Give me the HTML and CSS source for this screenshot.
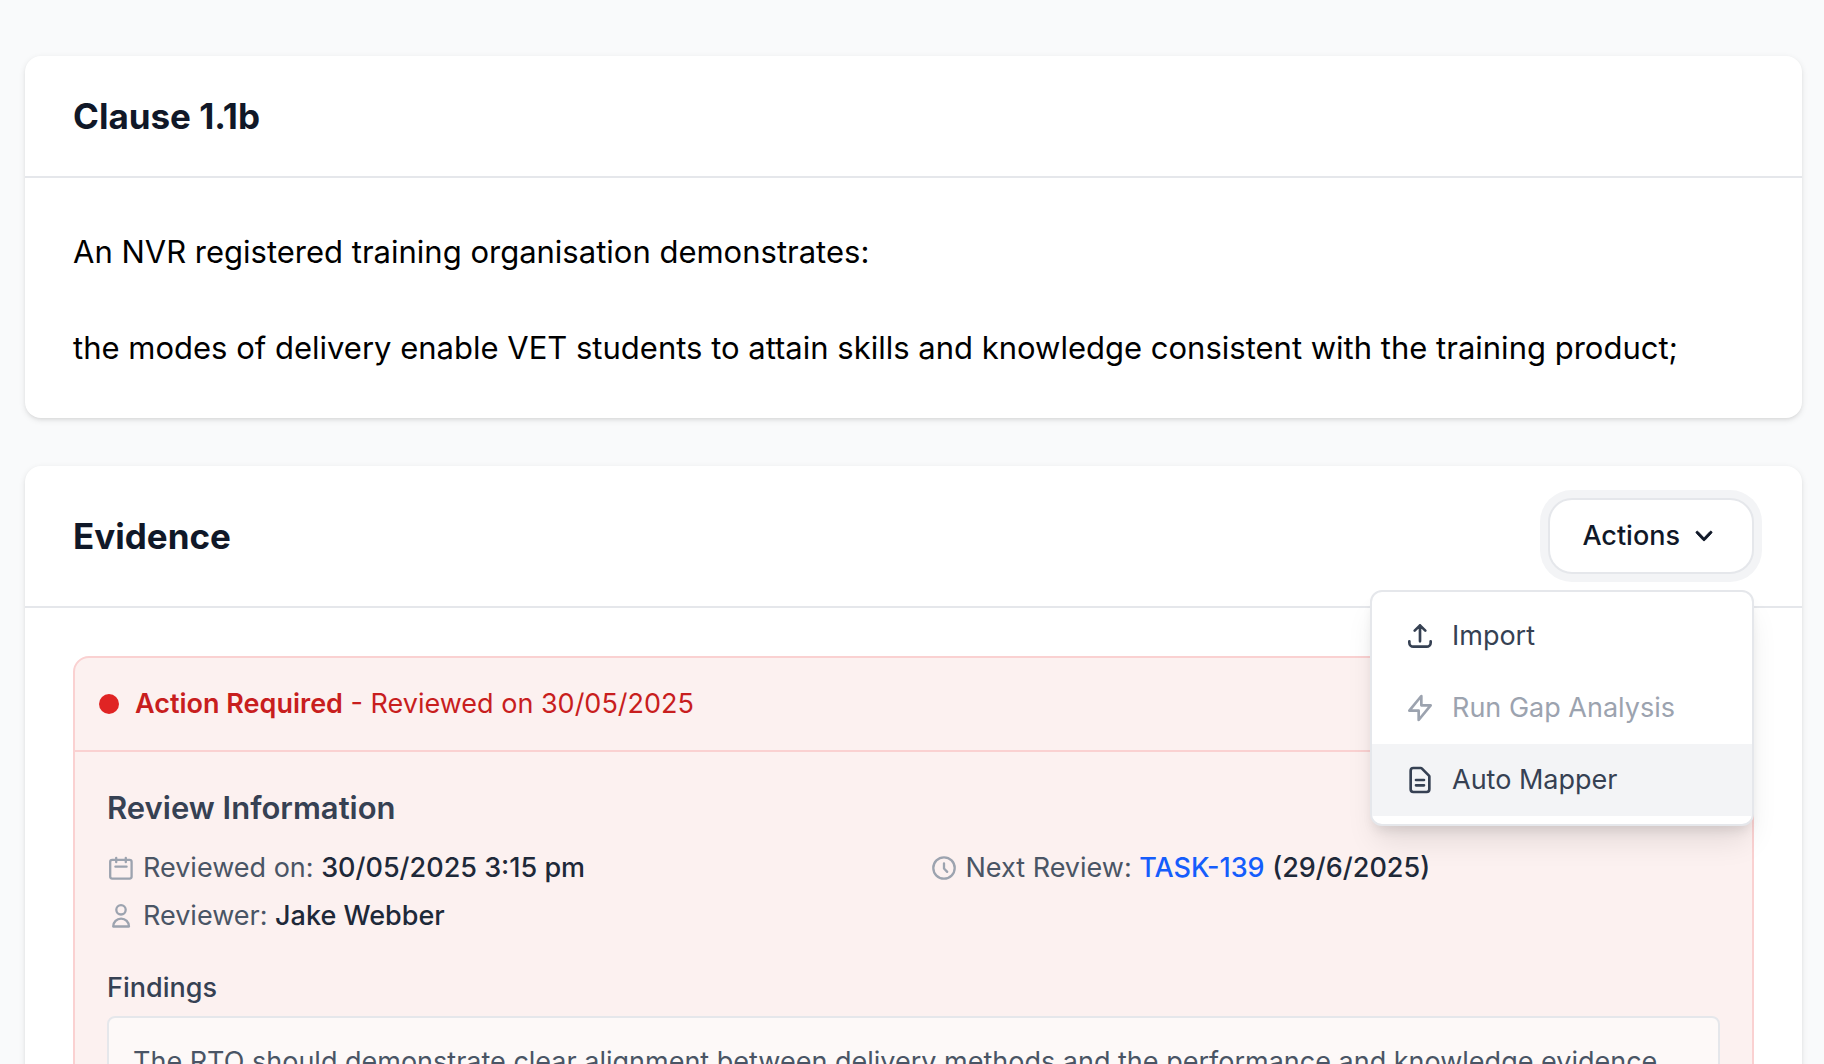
FILE: index.html
```html
<!DOCTYPE html>
<html lang="en">
<head>
<meta charset="UTF-8">
<meta name="viewport" content="width=device-width, initial-scale=1">
<title>Clause 1.1b</title>
<link rel="stylesheet" href="styles.css">
</head>
<body>

<main class="page">
    <!-- clause text -->
    <section class="card">
        <header class="card-header">
            <h2>Clause 1.1b</h2>
        </header>
        <div class="card-body clause">
            <p>An NVR registered training organisation demonstrates:</p>
            <p>the modes of delivery enable VET students to attain skills and knowledge consistent with the training product;</p>
        </div>
    </section>

    <!-- evidence -->
    <section class="card">
        <header class="card-header">
            <h2>Evidence</h2>
            <div class="dropdown">
                <button type="button" class="actions-btn" aria-haspopup="true" aria-expanded="true">
                    Actions
                    <svg class="icon chevron" viewBox="0 0 20 20"><path d="M5.23 7.21a.75.75 0 011.06.02L10 11.168l3.71-3.938a.75.75 0 111.08 1.04l-4.25 4.5a.75.75 0 01-1.08 0l-4.25-4.5a.75.75 0 01.02-1.06z"/></svg>
                </button>
                <div class="menu">
                    <button type="button" class="menu-item">
                        <svg class="icon line" viewBox="0 0 24 24"><path d="M4 16v1a3 3 0 003 3h10a3 3 0 003-3v-1m-4-8l-4-4m0 0L8 8m4-4v12"/></svg>
                        Import
                    </button>
                    <button type="button" class="menu-item" disabled>
                        <svg class="icon line" viewBox="0 0 24 24"><path d="M13 10V3L4 14h7v7l9-11h-7z"/></svg>
                        Run Gap Analysis
                    </button>
                    <button type="button" class="menu-item active">
                        <svg class="icon line" viewBox="0 0 24 24"><path d="M9 12h6m-6 4h6m2 5H7a2 2 0 01-2-2V5a2 2 0 012-2h5.586a1 1 0 01.707.293l5.414 5.414a1 1 0 01.293.707V19a2 2 0 01-2 2z"/></svg>
                        Auto Mapper
                    </button>
                </div>
            </div>
        </header>

        <div class="card-body">
            <article class="review">
                <div class="review-status">
                    <span class="dot"></span>
                    <p><strong>Action Required</strong> - Reviewed on 30/05/2025</p>
                </div>
                <div class="review-body">
                    <h3>Review Information</h3>
                    <div class="meta">
                        <div class="meta-item">
                            <svg class="icon-sm line" viewBox="0 0 28 28"><rect x="3.2" y="5.8" width="21.4" height="18.8" rx="2"/><path d="M9.2 3.8v4.4M18.8 3.8v4.4M8.4 12.7h11.2"/></svg>
                            <span>Reviewed on: <b>30/05/2025 3:15 pm</b></span>
                        </div>
                        <div class="meta-item">
                            <svg class="icon-sm line" viewBox="0 0 28 28"><circle cx="14" cy="14" r="10.7"/><path d="M14 9.3v5.2l3.2 3.4"/></svg>
                            <span>Next Review: <a href="#">TASK-139</a> <b>(29/6/2025)</b></span>
                        </div>
                        <div class="meta-item">
                            <svg class="icon-sm line" viewBox="0 0 28 28"><circle cx="14" cy="7.8" r="4.7"/><path d="M6.2 24.5a7.9 7.9 0 0115.8 0z"/></svg>
                            <span>Reviewer: <b>Jake Webber</b></span>
                        </div>
                    </div>
                    <h4>Findings</h4>
                    <div class="findings">The RTO should demonstrate clear alignment between delivery methods and the performance and knowledge evidence</div>
                </div>
            </article>
        </div>
    </section>
</main>

</body>
</html>
```
FILE: styles.css
```css
/* --- Base ----------------------------------------------------------- */
*{
    box-sizing:border-box;
}
body{
    margin:0;
    font-family:Inter,"Liberation Sans",sans-serif;
    font-size:27px;
    line-height:40px;
    color:#000;
    background:#f9fafb;
}
h2,h3,h4,p{
    margin:0;
}
button{
    font:inherit;
    cursor:pointer;
}
a{
    color:#155dfc;
    font-weight:500;
    text-decoration:none;
}
b{
    color:#1e2939;
    font-weight:500;
}

/* --- Layout --------------------------------------------------------- */
.page{
    display:flex;
    flex-direction:column;
    gap:48px;
    padding:56px 22px 56px 25px;
}
.card{
    background:#fff;
    border-radius:16px;
    box-shadow:0 2px 6px rgba(0,0,0,.1), 0 2px 4px -2px rgba(0,0,0,.1);
}
.card-header{
    display:flex;
    justify-content:space-between;
    align-items:center;
    padding:32px 48px;
    border-bottom:2px solid #e5e7eb;
}
.card-header h2{
    font-size:35px;
    line-height:56px;
    font-weight:700;
    color:#101828;
}
.card-body{
    padding:48px;
}
.clause{
    display:flex;
    flex-direction:column;
    gap:48px;
    padding:50px 48px 46px;
    font-size:31px;
    line-height:48px;
}

/* --- Icons ---------------------------------------------------------- */
.icon,
.icon-sm{
    flex:none;
    width:32px;
    height:32px;
}
.icon-sm{
    width:28px;
    height:28px;
}
.line{
    fill:none;
    stroke:currentColor;
    stroke-width:2;
    stroke-linecap:round;
    stroke-linejoin:round;
}
.icon-sm.line{ stroke-width:2.3; }
.chevron{
    fill:currentColor;
    stroke:currentColor;
    stroke-width:.5;
}

/* --- Actions dropdown ----------------------------------------------- */
.dropdown{
    position:relative;
}
.actions-btn{
    display:flex;
    align-items:center;
    gap:8px;
    padding:16px 32px;
    border:2px solid #e5e7eb;
    border-radius:24px;
    background:#fff;
    color:#101828;
    font-weight:500;
    box-shadow:0 0 0 8px #f3f4f6;
}
.menu{
    position:absolute;
    top:100%;
    right:0;
    z-index:10;
    width:384px;
    margin-top:16px;
    padding:8px 0;
    background:#fff;
    border:2px solid #e5e7eb;
    border-radius:12px;
    box-shadow:0 20px 30px -6px rgba(0,0,0,.1), 0 8px 12px -4px rgba(0,0,0,.1);
}
.menu-item{
    display:flex;
    align-items:center;
    gap:16px;
    width:100%;
    padding:16px 32px;
    border:none;
    background:none;
    color:#364153;
    text-align:left;
}
.menu-item.active{ background:#f3f4f6; }
.menu-item:disabled{
    color:#9ca3af;
    cursor:not-allowed;
}

/* --- Review panel --------------------------------------------------- */
.review{
    border:2px solid #fad1d1;
    border-radius:16px;
    background:#fcf1f0;
}
.review-status{
    display:flex;
    align-items:center;
    gap:16px;
    padding:26px 24px;
    border-bottom:2px solid #fad1d1;
    color:#c81e1e;
}
.review-status strong{
    font-weight:600;
}
.dot{
    width:20px;
    height:20px;
    border-radius:50%;
    background:#e02424;
}
.review-body{
    padding:32px;
}
.review-body h3{
    margin-bottom:16px;
    font-size:31px;
    line-height:48px;
    font-weight:600;
    color:#364153;
}
.meta{
    display:grid;
    grid-template-columns:1fr 1fr;
    gap:8px 32px;
    color:#4a5565;
}
.meta-item{
    display:flex;
    align-items:center;
    gap:8px;
}
.meta-item svg{
    color:#9ca3af;
}
.review-body h4{
    margin:32px 0 8px;
    font-size:27px;
    font-weight:500;
    color:#364153;
}
.findings{
    padding:24px;
    border:2px solid #e5e7eb;
    border-radius:8px;
    background:#fdf9f8;
    color:#4a5565;
}
```
